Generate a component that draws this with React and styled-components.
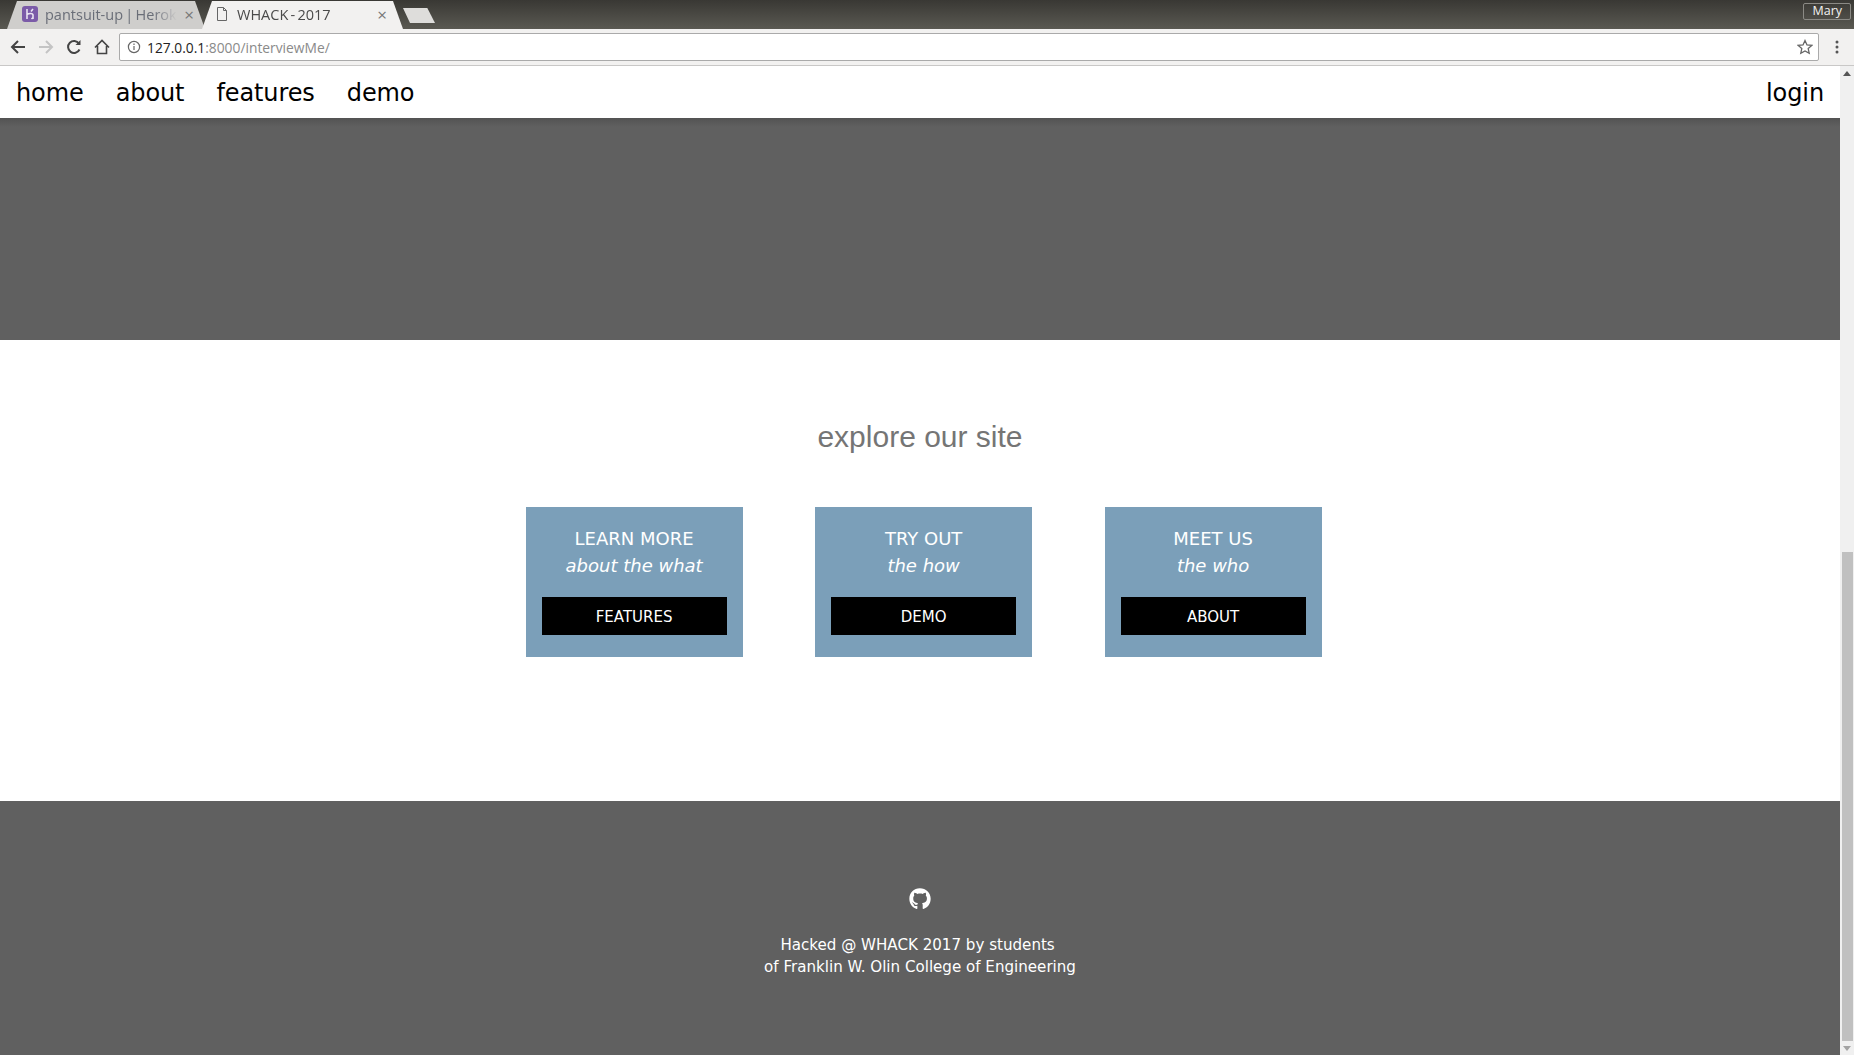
import styled, { createGlobalStyle } from "styled-components";
import { FaGithub } from "react-icons/fa";

const GlobalStyle = createGlobalStyle`
  html, body {
    margin: 0;
    padding: 0;
    height: 100%;
    overflow: hidden;
    background: #fff;
  }
`;

const Window = styled.div`
  width: 1854px;
  height: 1055px;
  display: flex;
  flex-direction: column;
  overflow: hidden;
  font-family: "DejaVu Sans", Verdana, sans-serif;
`;

// browser chrome
const TabStrip = styled.div`
  height: 29px;
  flex: none;
  display: flex;
  align-items: flex-end;
  padding-left: 7px;
  background: linear-gradient(#393834, #5a5952);
  position: relative;
`;

const Tab = styled.div`
  width: ${(p) => p.$width}px;
  height: 28px;
  margin-right: -3px;
  padding: 0 ${(p) => p.$right}px 2px ${(p) => p.$left}px;
  box-sizing: border-box;
  display: flex;
  align-items: center;
  gap: 7px;
  background: ${(p) => (p.$active ? "#f2f1f0" : "#cfcecc")};
  clip-path: polygon(10px 0, calc(100% - 10px) 0, 100% 100%, 0 100%);
  font-family: "Open Sans", "Liberation Sans", sans-serif;
  font-size: 14.5px;
  word-spacing: -1.5px;
  color: ${(p) => (p.$active ? "#4a4a4a" : "#6a6e78")};
  position: relative;
  z-index: ${(p) => (p.$active ? 1 : 0)};
`;

const TabTitle = styled.span`
  flex: 1;
  min-width: 0;
  white-space: nowrap;
  overflow: hidden;
  -webkit-mask-image: linear-gradient(to right, #000 82%, transparent);
`;

const TabClose = styled.span`
  font-size: 17px;
  line-height: 1;
  color: #777;
`;

const NewTab = styled.div`
  width: 32px;
  height: 15px;
  margin: 0 0 6px 3px;
  background: #dedddb;
  clip-path: polygon(0 0, 76% 0, 100% 100%, 22% 100%);
`;

const ProfileBadge = styled.div`
  position: absolute;
  top: 3px;
  right: 3px;
  padding: 0 8px;
  height: 15px;
  line-height: 14px;
  border: 1px solid #8b8a85;
  border-radius: 2px;
  font-family: "Open Sans", sans-serif;
  font-size: 12.5px;
  color: #f2f1f0;
`;

const Toolbar = styled.div`
  height: 37px;
  flex: none;
  box-sizing: border-box;
  display: flex;
  align-items: center;
  padding: 0 15px 0 4px;
  background: #f2f1f0;
  border-bottom: 1px solid #c9c8c7;
`;

const ToolButton = styled.span`
  width: 28px;
  height: 28px;
  flex: none;
  display: flex;
  align-items: center;
  justify-content: center;
`;

const AddressBar = styled.div`
  flex: 1;
  height: 28px;
  margin: 0 16px 0 3px;
  box-sizing: border-box;
  display: flex;
  align-items: center;
  gap: 6px;
  padding: 0 5px 0 7px;
  background: #fff;
  border: 1px solid #aaa;
  border-radius: 2px;
  font-family: "Open Sans", sans-serif;
  font-size: 13.8px;
  color: #8a8a8a;
`;

const Url = styled.span`
  flex: 1;
`;

const Host = styled.span`
  color: #222;
`;

// page and its scrollbar
const Viewport = styled.div`
  flex: 1;
  min-height: 0;
  display: flex;
`;

const Page = styled.div`
  flex: 1;
  display: flex;
  flex-direction: column;
`;

const Scrollbar = styled.div`
  width: 14px;
  flex: none;
  display: flex;
  flex-direction: column;
  align-items: center;
  background: #f0f0f0;
`;

const ScrollArrow = styled.span`
  height: 14px;
  flex: none;
  display: flex;
  align-items: center;
  justify-content: center;
`;

const ScrollTrack = styled.div`
  flex: 1;
  width: 100%;
  display: flex;
  flex-direction: column;
  justify-content: flex-end;
  align-items: center;
`;

const ScrollThumb = styled.div`
  width: 11px;
  height: 489px;
  background: #c0c0c0;
`;

const Nav = styled.nav`
  height: 52px;
  flex: none;
  display: flex;
  align-items: center;
  gap: 32px;
  padding: 2px 16px 0;
  background: #fff;
  box-sizing: border-box;
  font-size: 24px;
  letter-spacing: -0.1px;
  color: #000;
`;

const NavSpacer = styled.div`
  flex: 1;
`;

const Hero = styled.div`
  height: 222px;
  flex: none;
  background: linear-gradient(#535353, #606060 9px);
`;

const Explore = styled.section`
  height: 461px;
  flex: none;
  box-sizing: border-box;
  padding-top: 79px;
  background: #fff;
  display: flex;
  flex-direction: column;
  align-items: center;
`;

const Heading = styled.h2`
  margin: 0;
  font-family: "Liberation Sans", Arial, sans-serif;
  font-size: 30px;
  font-weight: 400;
  line-height: 36px;
  color: #757575;
`;

const CardRow = styled.div`
  display: flex;
  gap: 72.5px;
  margin: 52px 0 0 7.2px;
`;

const Card = styled.div`
  width: 217px;
  height: 150px;
  box-sizing: border-box;
  padding: 18px 16px 0;
  background: #7b9fb9;
  color: #fff;
  text-align: center;
  font-size: 18px;
  line-height: 27px;
`;

const CardSub = styled.div`
  font-style: italic;
`;

const CardButton = styled.div`
  height: 38px;
  margin-top: 18px;
  background: #000;
  color: #fff;
  font-size: 15px;
  line-height: 40px;
`;

const Footer = styled.footer`
  flex: 1;
  background: #606060;
  color: #fff;
  display: flex;
  flex-direction: column;
  align-items: center;
  padding-top: 87px;
  font-size: 15.1px;
  line-height: 22px;
  text-align: center;
`;

const FooterText = styled.div`
  margin-top: 24px;
`;

const cards = [
  { title: "LEARN MORE", sub: "about the what", button: "FEATURES" },
  { title: "TRY OUT", sub: "the how", button: "DEMO" },
  { title: "MEET US", sub: "the who", button: "ABOUT" },
];

export default function App() {
  return (
    <Window>
      <GlobalStyle />
      <TabStrip>
        <Tab $width={198} $left={15} $right={11}>
          <svg width="16" height="16" viewBox="0 0 16 16" fill="none">
            <rect width="16" height="16" rx="3" fill="#7b5ba8" />
            <path d="M5 3v10M5 8.500c2-1.500 6-1.500 6 .5v4M11 3 9 5.500M11 11.500 9.500 13" stroke="#e9e3f2" strokeWidth="1.600" />
          </svg>
          <TabTitle>pantsuit-up | Heroku</TabTitle>
          <TabClose>×</TabClose>
        </Tab>
        <Tab $active $width={201} $left={12} $right={16}>
          <svg width="16" height="16" viewBox="0 0 16 16" fill="none" stroke="#666" strokeWidth="1">
            <path d="M3.500 1.500h6l3 3v10h-9z M9.500 1.500v3h3" />
          </svg>
          <TabTitle>WHACK - 2017</TabTitle>
          <TabClose>×</TabClose>
        </Tab>
        <NewTab />
        <ProfileBadge>Mary</ProfileBadge>
      </TabStrip>
      <Toolbar>
        <ToolButton>
          <svg width="16" height="16" viewBox="0 0 16 16" fill="none" stroke="#444" strokeWidth="2">
            <path d="M15 8H2M8 2 2 8l6 6" />
          </svg>
        </ToolButton>
        <ToolButton>
          <svg width="16" height="16" viewBox="0 0 16 16" fill="none" stroke="#c4c4c4" strokeWidth="2">
            <path d="M1 8h13M8 2l6 6-6 6" />
          </svg>
        </ToolButton>
        <ToolButton>
          <svg width="16" height="16" viewBox="0 0 16 16" fill="none" stroke="#444" strokeWidth="2">
            <path d="M13.500 10.500A6 6 0 1 1 13 4.500" />
            <path d="M14.500 1v5h-5z" fill="#444" stroke="none" />
          </svg>
        </ToolButton>
        <ToolButton>
          <svg width="16" height="16" viewBox="0 0 16 16" fill="none" stroke="#444" strokeWidth="1.600">
            <path d="M1 8.500 8 1.500l7 7M3.500 7v7.500h9V7" />
          </svg>
        </ToolButton>
        <AddressBar>
          <svg width="14" height="14" viewBox="0 0 14 14" fill="none" stroke="#666" strokeWidth="1.200">
            <circle cx="7" cy="7" r="5.600" />
            <path d="M7 6v4M7 3.600v1.400" />
          </svg>
          <Url>
            <Host>127.0.0.1</Host>:8000/interviewMe/
          </Url>
          <svg width="16" height="16" viewBox="0 0 16 16" fill="none" stroke="#666" strokeWidth="1.300">
            <path d="m8 1.500 2 4.400 4.800.5-3.600 3.200 1 4.700L8 11.900l-4.200 2.400 1-4.700L1.200 6.400 6 5.900z" />
          </svg>
        </AddressBar>
        <svg width="4" height="14" viewBox="0 0 4 14" fill="#555">
          <circle cx="2" cy="2" r="1.500" />
          <circle cx="2" cy="7" r="1.500" />
          <circle cx="2" cy="12" r="1.500" />
        </svg>
      </Toolbar>
      <Viewport>
        <Page>
          <Nav>
            <span>home</span>
            <span>about</span>
            <span>features</span>
            <span>demo</span>
            <NavSpacer />
            <span>login</span>
          </Nav>
          <Hero />
          <Explore>
            <Heading>explore our site</Heading>
            <CardRow>
              {cards.map((card) => (
                <Card key={card.button}>
                  <div>{card.title}</div>
                  <CardSub>{card.sub}</CardSub>
                  <CardButton>{card.button}</CardButton>
                </Card>
              ))}
            </CardRow>
          </Explore>
          <Footer>
            <FaGithub size={22} />
            <FooterText>
              Hacked @ WHACK 2017 by students{"\u00a0"}
              <br />
              of Franklin W. Olin College of Engineering
            </FooterText>
          </Footer>
        </Page>
        <Scrollbar>
          <ScrollArrow>
            <svg width="8" height="5" viewBox="0 0 8 5" fill="#555">
              <path d="M0 5 4 0l4 5z" />
            </svg>
          </ScrollArrow>
          <ScrollTrack>
            <ScrollThumb />
          </ScrollTrack>
          <ScrollArrow>
            <svg width="8" height="5" viewBox="0 0 8 5" fill="#a3a3a3">
              <path d="M0 0h8L4 5z" />
            </svg>
          </ScrollArrow>
        </Scrollbar>
      </Viewport>
    </Window>
  );
}
